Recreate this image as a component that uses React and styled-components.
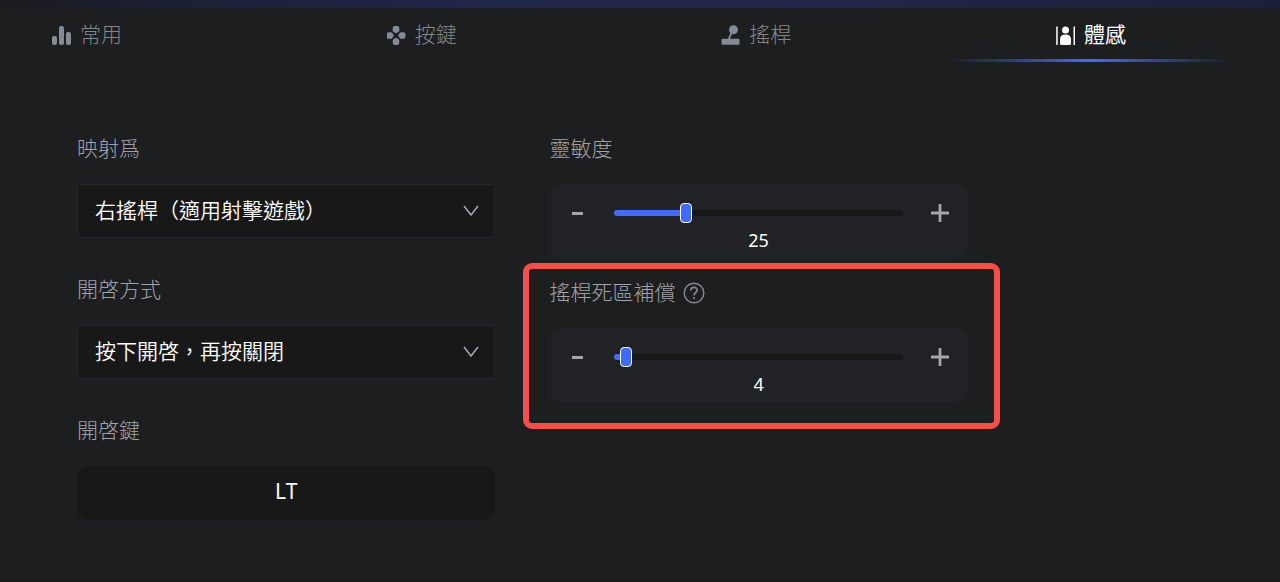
import React, { useState } from 'react';
import styled, { createGlobalStyle, css } from 'styled-components';

const GlobalStyle = createGlobalStyle`
  * {
    box-sizing: border-box;
  }

  body {
    margin: 0;
    background: #1c1e1f;
    font-family: 'Noto Sans', 'Noto Sans CJK TC', sans-serif;
    font-size: 21px;
    color: #ffffff;
  }

  button,
  select {
    font: inherit;
    color: inherit;
    margin: 0;
  }
`;

const cjk = css`
  font-family: 'Noto Sans CJK TC', sans-serif;
`;

const Page = styled.div`
  min-height: 100vh;
  border-bottom: 2px solid #19191b;
`;

const TopStrip = styled.div`
  height: 8px;
  background: linear-gradient(90deg, #1b1c1f 0%, #1c2035 14%, #20254a 38%, #22264a 60%, #1b2038 100%);
`;

const TabBar = styled.nav`
  display: flex;
  justify-content: space-between;
  padding: 0 154px 0 52px;
`;

const Tab = styled.button`
  ${cjk}
  position: relative;
  display: flex;
  align-items: center;
  gap: 8px;
  height: 54px;
  padding: 0;
  border: none;
  background: none;
  font-weight: ${({ $active }) => ($active ? 400 : 300)};
  color: ${({ $active }) => ($active ? '#ffffff' : '#85878c')};
  cursor: pointer;

  svg {
    color: ${({ $active }) => ($active ? '#ffffff' : '#858a97')};
  }

  &::after {
    content: '';
    display: ${({ $active }) => ($active ? 'block' : 'none')};
    position: absolute;
    bottom: 0;
    left: 50%;
    width: 282px;
    height: 3px;
    transform: translateX(-50%);
    background: linear-gradient(90deg, transparent, #416bff 50%, transparent);
  }
`;

const TabText = styled.span`
  line-height: 28px;
  padding-bottom: 4px;
`;

const Settings = styled.main`
  display: grid;
  grid-template-columns: minmax(0, 418fr) minmax(0, 418fr) minmax(0, 203fr);
  column-gap: 54px;
  padding: 71px 55px 0 77px;
`;

const Column = styled.div`
  display: flex;
  flex-direction: column;
  gap: ${({ $gap }) => $gap}px;
`;

const Field = styled.div`
  position: relative;
  display: flex;
  flex-direction: column;
  gap: 19px;
`;

const LabelRow = styled.div`
  display: flex;
  align-items: center;
  gap: 8px;
  height: 32px;
`;

const Label = styled.label`
  ${cjk}
  font-weight: 300;
  line-height: 28px;
  padding-bottom: 4px;
  color: #a0a2a8;
`;

const SelectBox = styled.div`
  display: grid;
  align-items: center;

  > * {
    grid-area: 1 / 1;
  }

  svg {
    justify-self: end;
    margin-right: 16px;
    pointer-events: none;
  }
`;

const Select = styled.select`
  ${cjk}
  appearance: none;
  width: 100%;
  height: 54px;
  padding: 0 48px 4px 17px;
  border: 1px solid #242527;
  border-radius: 4px;
  background: #181818;
  font-weight: 350;
`;

const KeyButton = styled.button`
  height: 54px;
  padding: 0 0 4px;
  border: none;
  border-radius: 12px;
  background: #181818;
`;

const SliderCard = styled.div`
  display: grid;
  grid-template-columns: 28px minmax(0, 1fr) 28px;
  align-content: start;
  column-gap: 23px;
  height: 75px;
  padding: 15px 14px 0;
  border-radius: 12px;
  background: #212226;
`;

const StepButton = styled.button`
  display: flex;
  align-items: center;
  justify-content: center;
  height: 28px;
  padding: 0;
  border: none;
  background: none;
  color: #a3a6ad;
  cursor: pointer;
`;

const Track = styled.div`
  display: grid;
  align-items: center;

  > * {
    grid-area: 1 / 1;
  }
`;

const Rail = styled.div`
  height: 6px;
  border-radius: 3px;
  background: #181818;
  overflow: hidden;
`;

const Fill = styled.div`
  height: 100%;
  background: #416bff;
`;

// Wider than the rail by one thumb, so the thumb is centred on the end of the fill.
const Range = styled.input`
  appearance: none;
  width: calc(100% + 12px);
  height: 28px;
  margin: 0 -6px;
  background: none;

  &::-webkit-slider-thumb {
    appearance: none;
    width: 12px;
    height: 20px;
    border: 1px solid #ffffff;
    border-radius: 4px;
    background: #416bff;
  }
`;

const Value = styled.output`
  grid-column: 1 / -1;
  text-align: center;
  font-size: 18px;
  line-height: 26px;
`;

const HelpButton = styled.button`
  display: flex;
  padding: 0;
  border: none;
  background: none;
  color: #85878c;
`;

const Highlight = styled.div`
  position: absolute;
  inset: -14px -32px -26px -26px;
  border: 6px solid #f84e4a;
  border-radius: 9px;
  pointer-events: none;
`;

const BarsIcon = () => (
  <svg width="20" height="20" viewBox="0 -1 20 20" fill="currentColor" aria-hidden="true">
    <rect x="0" y="10" width="5" height="9" rx="2" />
    <rect x="7" y="0" width="5" height="19" rx="2" />
    <rect x="14" y="6" width="5" height="13" rx="2" />
  </svg>
);

const PadIcon = () => (
  <svg width="20" height="20" viewBox="0.5 -1 20 20" fill="currentColor" aria-hidden="true">
    <path d="M6.200 2.200Q6.200 0 8.400 0h2.200q2.200 0 2.200 2.200v2.300q0 .5-.5 1l-1.600 1.300q-1.200.8-2.400 0L6.700 5.500q-.5-.5-.5-1z" />
    <path d="M6.200 16.800q0 2.200 2.200 2.200h2.200q2.200 0 2.200-2.200v-2.300q0-.5-.5-1l-1.600-1.300q-1.200-.8-2.400 0l-1.600 1.300q-.5.5-.5 1z" />
    <path d="M2.200 6.200Q0 6.200 0 8.400v2.200q0 2.200 2.200 2.200h2.300q.5 0 1-.5l1.300-1.600q.8-1.200 0-2.400L5.500 6.700q-.5-.5-1-.5z" />
    <path d="M16.800 6.200q2.200 0 2.200 2.200v2.200q0 2.200-2.200 2.200h-2.300q-.5 0-1-.5l-1.300-1.600q-.8-1.200 0-2.400l1.300-1.600q.5-.5 1-.5z" />
  </svg>
);

const StickIcon = () => (
  <svg width="20" height="20" viewBox="0 -1 20 20" fill="currentColor" aria-hidden="true">
    <circle cx="12.500" cy="3.700" r="4.500" />
    <path d="M10.500 6.500 7.500 14" stroke="currentColor" strokeWidth="2" />
    <rect x="0.500" y="12.700" width="18" height="6" rx="1" />
  </svg>
);

const MotionIcon = () => (
  <svg width="20" height="20" viewBox="0.500 -1 20 20" fill="currentColor" aria-hidden="true">
    <rect x="0.700" y="0.500" width="1.500" height="18.500" />
    <rect x="18" y="0.500" width="1.500" height="18.500" />
    <circle cx="10" cy="4" r="3.500" />
    <path d="M4.500 17.500v-4q0-5 5.500-5t5.500 5v4q0 1.500-1.500 1.500H6q-1.500 0-1.500-1.500z" />
  </svg>
);

const Chevron = () => (
  <svg width="16" height="12" viewBox="0 0 16 12" fill="none" stroke="#a3a6ad" strokeWidth="1.600" aria-hidden="true">
    <path d="M1 1l7 9 7-9" />
  </svg>
);

const HelpIcon = () => (
  <svg width="22" height="22" viewBox="0 0 22 22" fill="none" stroke="currentColor" strokeWidth="1.400" aria-hidden="true">
    <circle cx="11" cy="11" r="9.800" />
    <path d="M7.800 8.500c0-4 6.400-4 6.400-.4 0 2.400-3.200 2.500-3.200 5.400" strokeWidth="1.700" />
    <path d="M11 15v2" strokeWidth="1.800" />
  </svg>
);

const MinusIcon = () => (
  <svg width="20" height="20" viewBox="0 0 20 20" aria-hidden="true">
    <path d="M5 10.500h11" stroke="currentColor" strokeWidth="3" />
  </svg>
);

const PlusIcon = () => (
  <svg width="20" height="20" viewBox="0 0 20 20" aria-hidden="true">
    <path d="M1 10h18M10 1v18" stroke="currentColor" strokeWidth="2.800" />
  </svg>
);

const tabs = [
  { name: '常用', Icon: BarsIcon },
  { name: '按鍵', Icon: PadIcon },
  { name: '搖桿', Icon: StickIcon },
  { name: '體感', Icon: MotionIcon },
];

const SelectField = ({ id, label, option }) => (
  <Field>
    <LabelRow>
      <Label htmlFor={id}>{label}</Label>
    </LabelRow>
    <SelectBox>
      <Select id={id}>
        <option>{option}</option>
      </Select>
      <Chevron />
    </SelectBox>
  </Field>
);

const SliderField = ({ id, label, initial, help, highlighted }) => {
  const [value, setValue] = useState(initial);
  const step = (delta) => setValue(Math.min(100, Math.max(0, value + delta)));

  return (
    <Field>
      <LabelRow>
        <Label htmlFor={id}>{label}</Label>
        {help && (
          <HelpButton type="button" aria-label={label}>
            <HelpIcon />
          </HelpButton>
        )}
      </LabelRow>
      <SliderCard>
        <StepButton type="button" aria-label="-" onClick={() => step(-1)}>
          <MinusIcon />
        </StepButton>
        <Track>
          <Rail>
            <Fill style={{ width: `${value}%` }} />
          </Rail>
          <Range
            id={id}
            type="range"
            min="0"
            max="100"
            value={value}
            onChange={(e) => setValue(Number(e.target.value))}
          />
        </Track>
        <StepButton type="button" aria-label="+" onClick={() => step(1)}>
          <PlusIcon />
        </StepButton>
        <Value htmlFor={id}>{value}</Value>
      </SliderCard>
      {highlighted && <Highlight />}
    </Field>
  );
};

const App = () => {
  const [active, setActive] = useState('體感');

  return (
    <Page>
      <GlobalStyle />
      <TopStrip />
      <TabBar>
        {tabs.map(({ name, Icon }) => (
          <Tab key={name} type="button" $active={name === active} onClick={() => setActive(name)}>
            <Icon />
            <TabText>{name}</TabText>
          </Tab>
        ))}
      </TabBar>
      <Settings>
        <Column $gap={36}>
          <SelectField id="mapping" label="映射爲" option="右搖桿（適用射擊遊戲）" />
          <SelectField id="mode" label="開啓方式" option="按下開啓，再按關閉" />
          <Field>
            <LabelRow>
              <Label htmlFor="key">開啓鍵</Label>
            </LabelRow>
            <KeyButton id="key" type="button">
              LT
            </KeyButton>
          </Field>
        </Column>
        <Column $gap={18}>
          <SliderField id="sensitivity" label="靈敏度" initial={25} />
          <SliderField id="deadzone" label="搖桿死區補償" initial={4} help highlighted />
        </Column>
      </Settings>
    </Page>
  );
};

export default App;
